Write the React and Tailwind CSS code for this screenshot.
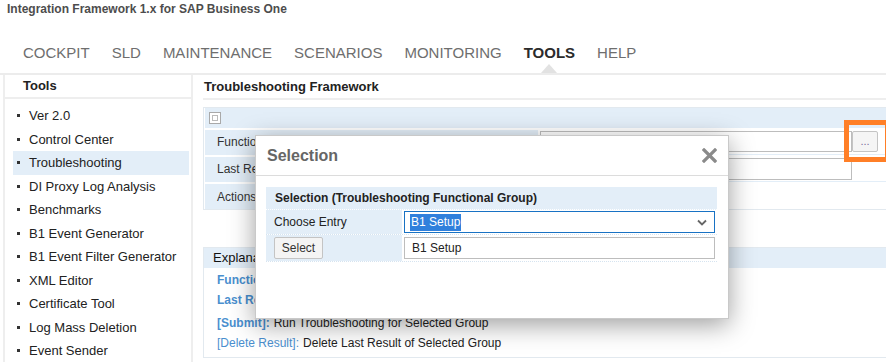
const tools = [
  'Ver 2.0',
  'Control Center',
  'Troubleshooting',
  'DI Proxy Log Analysis',
  'Benchmarks',
  'B1 Event Generator',
  'B1 Event Filter Generator',
  'XML Editor',
  'Certificate Tool',
  'Log Mass Deletion',
  'Event Sender',
]

const tabs = ['COCKPIT', 'SLD', 'MAINTENANCE', 'SCENARIOS', 'MONITORING', 'TOOLS', 'HELP']

function CloseIcon() {
  return (
    <svg width="15" height="15" viewBox="0 0 15 15">
      <path d="M2 2 L13 13 M13 2 L2 13" stroke="#8a8a8a" strokeWidth="3.2" strokeLinecap="square" />
    </svg>
  )
}

function Chevron() {
  return (
    <svg width="10" height="7" viewBox="0 0 10 7">
      <path d="M1 1.5 L5 5.5 L9 1.5" fill="none" stroke="#666" strokeWidth="1.8" />
    </svg>
  )
}

function SelectionDialog() {
  return (
    <div className="absolute left-[255px] top-[135px] w-[474px] h-[184px] bg-white border border-[#c9c9c9] shadow-[0_6px_24px_rgba(0,0,0,0.38)]">
      <div className="flex h-[40px] items-center justify-between border-b border-[#dcdcdc] pl-[11px] pr-[11px]">
        <span className="text-[16px] font-bold text-[#666]">Selection</span>
        <CloseIcon />
      </div>

      <div className="ml-[10px] mr-[11px] mt-[11px]">
        <div className="flex h-[23px] items-center bg-[#e3eef8] pl-[9px] text-[12px] font-bold text-[#222] border-b border-dotted border-white">
          Selection (Troubleshooting Functional Group)
        </div>

        <div className="flex h-[25px] border-b border-dotted border-[#d6e4f0]">
          <div className="flex w-[136px] items-center bg-[#e3eef8] pl-[8px] text-[12px] text-[#222]">
            Choose Entry
          </div>
          <div className="flex-1 pl-[2px] pt-[1px]">
            <div className="flex h-[22px] w-[311px] items-center justify-between border border-[#1872c4] bg-white pl-[5px] pr-[7px]">
              <span className="bg-[#3080dc] px-[1px] text-[12px] leading-[17px] text-white">B1 Setup</span>
              <Chevron />
            </div>
          </div>
        </div>

        <div className="flex h-[27px] border-b border-dotted border-[#d6e4f0]">
          <div className="flex w-[136px] items-start bg-[#e3eef8] pl-[8px] pt-[2px]">
            <button className="h-[22px] w-[49px] rounded-[2px] border border-[#c4c4c4] bg-[#f4f4f4] text-[12px] text-[#333]">
              Select
            </button>
          </div>
          <div className="flex-1 pl-[2px] pt-[2px]">
            <div className="flex h-[22px] w-[311px] items-center border border-[#bdbdbd] bg-white pl-[7px] text-[12px] text-[#222]">
              B1 Setup
            </div>
          </div>
        </div>
      </div>
    </div>
  )
}

export default function App() {
  return (
    <div className="relative w-[886px] h-[362px] overflow-hidden bg-white font-['Liberation_Sans',Arial,sans-serif] text-[#333]">
      <div className="h-[19px] pl-[7px] pt-[1px] text-[12px] font-bold leading-[16px] text-[#4d4d4d]">
        Integration Framework 1.x for SAP Business One
      </div>

      <nav className="flex h-[54px] items-start gap-[22px] pl-[23px] pt-[25px] text-[15px] leading-[18px] text-[#6e6e6e]">
        {tabs.map((tab) => (
          <div key={tab} className={tab === 'TOOLS' ? 'relative font-bold text-[#2b2b2b]' : 'relative'}>
            {tab}
            {tab === 'TOOLS' && (
              <span className="absolute left-1/2 top-[20px] -translate-x-1/2 border-x-[8px] border-b-[9px] border-x-transparent border-b-[#e2e2e2]" />
            )}
          </div>
        ))}
      </nav>

      <div className="flex border-t-2 border-[#ececec]">
        <aside className="ml-[3px] h-[300px] w-[190px] shrink-0 border-x-2 border-[#eeeeee]">
          <div className="flex h-[24px] items-center border-b-2 border-[#eeeeee] pl-[18px] text-[13px] font-bold text-[#222]">
            Tools
          </div>
          <ul className="pl-[8px] pr-[2px] pt-[5px]">
            {tools.map((tool) => (
              <li
                key={tool}
                className={
                  tool === 'Troubleshooting'
                    ? 'flex h-[23.5px] items-center bg-[#e3eef8] text-[13px] text-[#222]'
                    : 'flex h-[23.5px] items-center text-[13px] text-[#222]'
                }
              >
                <span className="ml-[4px] mr-[9px] h-[3px] w-[3px] bg-[#333]" />
                {tool}
              </li>
            ))}
          </ul>
        </aside>

        <main className="flex-1 overflow-hidden pl-[10px]">
          <div className="flex h-[25px] items-center border-b-2 border-[#eeeeee] pl-[1px] text-[13px] font-bold text-[#222]">
            Troubleshooting Framework
          </div>

          <section className="mt-[7px] w-[700px] border border-[#e2e9ef] px-[1px]">
            <div className="flex h-[20px] items-center bg-[#e3eef8] pl-[4px]">
              <span className="flex h-[12px] w-[12px] items-center justify-center border border-[#a9a9a9] bg-white">
                <span className="h-[6px] w-[6px] border border-[#bbb]" />
              </span>
            </div>

            <div className="flex h-[27px] border-b border-[#e3eef8]">
              <div className="flex w-[333px] items-center bg-[#e3eef8] pl-[12px] text-[12px] text-[#333] border-t-2 border-white">
                Functional Group
              </div>
              <div className="flex flex-1 items-start pl-[2px] pt-[3px]">
                <div className="h-[21px] w-[312px] border border-[#bdbdbd] bg-white" />
                <button className="flex h-[21px] w-[26px] items-center justify-center rounded-[2px] border border-[#c4c4c4] bg-[#f5f5f5] text-[11px] leading-none text-[#7a6d9a]">
                  ...
                </button>
              </div>
            </div>

            <div className="flex h-[27px] border-b border-[#e3eef8]">
              <div className="flex w-[333px] items-center bg-[#e3eef8] pl-[12px] text-[12px] text-[#333] border-t-2 border-white">
                Last Result
              </div>
              <div className="flex-1 pl-[2px] pt-[3px]">
                <div className="h-[22px] w-[312px] border border-[#bdbdbd] bg-white" />
              </div>
            </div>

            <div className="flex h-[27px]">
              <div className="flex w-[333px] items-center bg-[#e3eef8] pl-[12px] text-[12px] text-[#333] border-t-2 border-white">
                Actions
              </div>
              <div className="flex-1" />
            </div>
          </section>

          <section className="mt-[37px] w-[700px] border border-[#e2e9ef] pb-[4px]">
            <div className="flex h-[20px] items-center bg-[#e3eef8] pl-[9px] text-[13px] text-[#111]">
              Explanation
            </div>
            <div className="pl-[13px] text-[12px]">
              <div className="mt-[2px] flex h-[20px] items-center font-bold text-[#4a8fcf]">
                Functional Group: Select Group
              </div>
              <div className="flex h-[20px] items-center font-bold text-[#4a8fcf]">
                Last Result: Show Last Result
              </div>
              <div className="mt-[3px] flex h-[20px] items-center text-[#222]">
                <span className="mr-[4px] font-bold text-[#4a8fcf]">[Submit]:</span>
                Run Troubleshooting for Selected Group
              </div>
              <div className="flex h-[20px] items-center text-[#222]">
                <span className="mr-[4px] text-[#4a8fcf]">[Delete Result]:</span>
                Delete Last Result of Selected Group
              </div>
            </div>
          </section>
        </main>
      </div>

      <div className="absolute left-[844px] top-[120px] h-[42px] w-[46px] border-[5px] border-[#ff7f27]" />

      <SelectionDialog />
    </div>
  )
}
